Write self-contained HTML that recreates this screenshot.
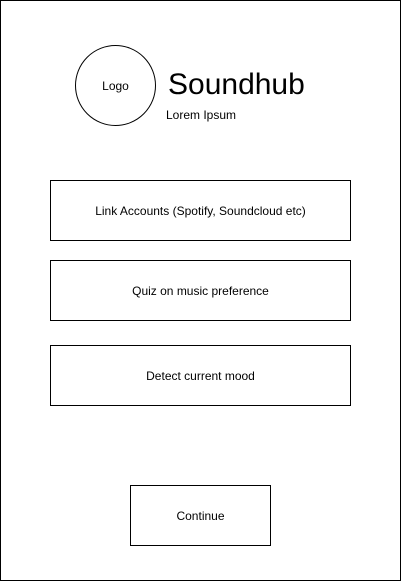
<!DOCTYPE html>
<html><head><style>
html,body{margin:0;padding:0;background:#fff;}
body{width:401px;height:581px;position:relative;overflow:hidden;font-family:"Liberation Sans",Arial,sans-serif;color:#000;}
.frame{position:absolute;left:0;top:0;width:399px;height:579px;border:1px solid #000;}
.circle{position:absolute;left:75px;top:45px;width:79px;height:79px;border:1px solid #000;border-radius:50%;display:flex;align-items:center;justify-content:center;font-size:12px;}
.title{position:absolute;left:168px;top:68px;font-size:30px;line-height:34px;}
.sub{position:absolute;left:166px;top:108px;font-size:12px;line-height:15px;}
.box{position:absolute;border:1px solid #000;display:flex;align-items:center;justify-content:center;font-size:12px;}
</style></head><body>
<div class="frame"></div>
<div class="circle">Logo</div>
<div class="title">Soundhub</div>
<div class="sub">Lorem Ipsum</div>
<div class="box" style="left:50px;top:180px;width:299px;height:59px;">Link Accounts (Spotify, Soundcloud etc)</div>
<div class="box" style="left:50px;top:260px;width:299px;height:59px;">Quiz on music preference</div>
<div class="box" style="left:50px;top:345px;width:299px;height:59px;">Detect current mood</div>
<div class="box" style="left:130px;top:485px;width:139px;height:59px;">Continue</div>
</body></html>
